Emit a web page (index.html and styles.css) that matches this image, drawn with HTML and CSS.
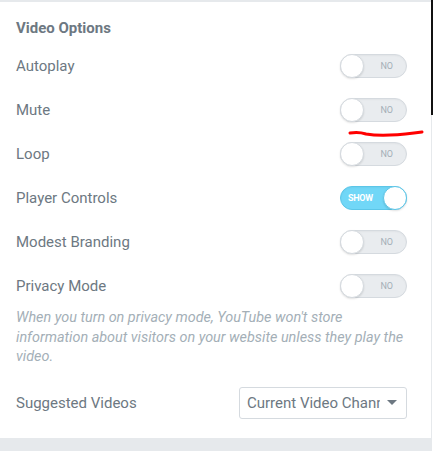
FILE: index.html
```html
<!DOCTYPE html>
<html lang="en">
<head>
  <meta charset="UTF-8" />
  <title>Video Options</title>
  <meta name="viewport" content="width=device-width, initial-scale=1.0"/>
  <link rel="stylesheet" href="styles.css">
</head>
<body>

  <div class="panel">
    <div class="section-title">Video Options</div>

    <div class="control">
      <span class="label">Autoplay</span>
      <span class="switch"><span class="knob"></span><span class="state">NO</span></span>
    </div>

    <div class="control">
      <span class="label">Mute</span>
      <span class="switch"><span class="knob"></span><span class="state">NO</span></span>
    </div>

    <div class="control">
      <span class="label">Loop</span>
      <span class="switch"><span class="knob"></span><span class="state">NO</span></span>
    </div>

    <div class="control">
      <span class="label">Player Controls</span>
      <span class="switch on"><span class="state">SHOW</span><span class="knob"></span></span>
    </div>

    <div class="control">
      <span class="label">Modest Branding</span>
      <span class="switch"><span class="knob"></span><span class="state">NO</span></span>
    </div>

    <div class="control">
      <span class="label">Privacy Mode</span>
      <span class="switch"><span class="knob"></span><span class="state">NO</span></span>
    </div>

    <p class="desc">When you turn on privacy mode, YouTube won't store information about visitors on your website unless they play the video.</p>

    <div class="control select-row">
      <span class="label">Suggested Videos</span>
      <div class="select">
        <span class="select-text">Current Video Channel</span>
        <span class="caret"></span>
      </div>
    </div>

    <!-- hand-drawn annotation under the Mute switch -->
    <svg class="scribble" width="80" height="12" viewBox="0 0 80 12">
      <path d="M2 6 C 8 5, 12 5, 18 7 C 30 9, 50 8, 66 6 L 74 5" fill="none" stroke="#f00" stroke-width="3" stroke-linecap="round"/>
    </svg>
  </div>

  <div class="footer-band"></div>

</body>
</html>
```

FILE: styles.css
```css
body {
  margin: 0;
  background: #fff;
  font-family: Roboto, Arial, sans-serif;
  color: #6d7882;
  width: 433px;
  height: 452px;
  overflow: hidden;
}
.panel {
  position: relative;
  width: 432px;
  border-top: 2px solid #e6e9ec;
  border-right: 1px solid #e6e9ec;
  padding: 17px 0 19px;
  box-sizing: border-box;
}
.panel::after {
  content: "";
  position: absolute;
  top: -2px;
  right: -2px;
  width: 2px;
  height: 115px;
  background: #111;
}
.section-title {
  font-weight: bold;
  font-size: 15px;
  line-height: 18px;
  padding: 0 16px;
  margin-bottom: 17px;
}
.control {
  display: flex;
  align-items: center;
  justify-content: space-between;
  padding: 0 24px 0 16px;
  height: 24px;
  margin-bottom: 20px;
}
.label {
  font-size: 15px;
}
.switch {
  display: flex;
  align-items: center;
  justify-content: space-between;
  width: 67px;
  height: 24px;
  box-sizing: border-box;
  border-radius: 12px;
  background: #e9ecef;
  border: 1px solid #d5dadf;
  box-shadow: inset 0 1px 2px rgba(0,0,0,0.04);
}
.knob {
  width: 24px;
  height: 24px;
  margin: -1px;
  border-radius: 50%;
  background: #fff;
  border: 1px solid #d5dadf;
  box-sizing: border-box;
  box-shadow: 0 1px 2px rgba(0,0,0,0.12);
}
.state {
  font-size: 9px;
  color: #a4afb7;
  margin-right: 13px;
}
.switch.on {
  background: #71d7f7;
  border-color: #5cc6e8;
}
.switch.on .state {
  color: #fff;
  font-weight: bold;
  margin: 0 0 0 7px;
  letter-spacing: -0.3px;
}
.switch.on .knob {
  border-color: #5cc6e8;
}
.desc {
  margin: -10px 24px 20px 16px;
  font-size: 14.4px;
  font-style: italic;
  line-height: 19.5px;
  color: #a4afb7;
}
.select-row {
  height: 32px;
  margin-bottom: 0;
}
.select {
  display: flex;
  align-items: center;
  width: 168px;
  height: 32px;
  box-sizing: border-box;
  border: 1px solid #d5dadf;
  border-radius: 3px;
  padding: 0 9px 0 7px;
  overflow: hidden;
}
.select-text {
  flex: none;
  width: 133px;
  font-size: 15px;
  white-space: nowrap;
  overflow: hidden;
  text-overflow: clip;
}
.caret {
  width: 0;
  height: 0;
  margin-left: 7px;
  border-left: 5px solid transparent;
  border-right: 5px solid transparent;
  border-top: 5px solid #6d7882;
}
.scribble {
  position: absolute;
  left: 348px;
  top: 125px;
}
.footer-band {
  height: 13px;
  width: 432px;
  background: #e6e9ec;
}
```
